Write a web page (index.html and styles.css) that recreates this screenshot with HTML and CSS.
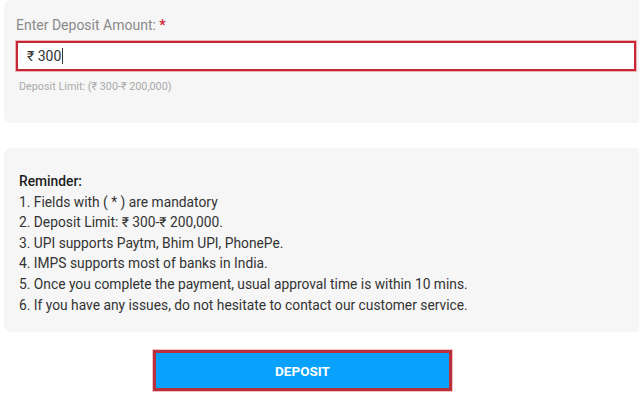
FILE: index.html
```html
<!DOCTYPE html>
<html>
<head>
<meta charset="utf-8">
<link rel="stylesheet" href="styles.css">
</head>
<body>
<div class="page">
  <section class="panel amount-panel">
    <label class="field-label">Enter Deposit Amount: <span class="req">*</span></label>
    <div class="amount-input"><span class="amount-value">₹ 300</span><span class="caret"></span></div>
    <div class="limit-hint">Deposit Limit: (₹ 300-₹ 200,000)</div>
  </section>
  <section class="panel reminder-panel">
    <div class="reminder-title">Reminder:</div>
    <ol class="reminder-list">
      <li>1. Fields with ( * ) are mandatory</li>
      <li>2. Deposit Limit: ₹ 300-₹ 200,000.</li>
      <li>3. UPI supports Paytm, Bhim UPI, PhonePe.</li>
      <li>4. IMPS supports most of banks in India.</li>
      <li>5. Once you complete the payment, usual approval time is within 10 mins.</li>
      <li>6. If you have any issues, do not hesitate to contact our customer service.</li>
    </ol>
  </section>
  <div class="actions">
    <button class="deposit-btn">DEPOSIT</button>
  </div>
</div>
</body>
</html>
```
FILE: styles.css
```css
* { box-sizing: border-box; }
html, body { margin: 0; padding: 0; background: #fff; }
body { font-family: Roboto, "Liberation Sans", Arial, sans-serif; width: 639px; height: 400px; overflow: hidden; }
.page { display: flex; flex-direction: column; padding-left: 4px; width: 650px; }
.panel { background: #f6f6f6; border-radius: 7px; }
.amount-panel { height: 123px; padding: 17px 14px 0 12px; display: flex; flex-direction: column; }
.field-label { font-size: 14px; color: #8a8a8a; line-height: 16px; }
.req { color: #d0283a; font-weight: 700; }
.amount-input {
  margin-top: 8px;
  height: 30px;
  background: #fff;
  border: 2px solid #c32a35;
  box-shadow: 0 0 0 1px rgba(232, 90, 105, 0.45);
  display: flex; align-items: center;
  padding-left: 9px;
  font-size: 14px; color: #333;
}
.caret { display: inline-block; width: 1px; height: 16px; background: #333; margin-left: 1px; }
.limit-hint { margin-top: 9px; font-size: 10.8px; color: #a9a9a9; line-height: 14px; padding-left: 3px; }
.reminder-panel { margin-top: 25px; height: 184px; padding: 23px 0 0 15px; color: #333; font-size: 13.8px; line-height: 20.6px; }
.reminder-title { font-weight: 500; color: #1e1e1e; }
.reminder-list { list-style: none; margin: 0; padding: 0; }
.actions { padding-left: 149px; margin-top: 18px; }
.deposit-btn {
  width: 299px; height: 41px;
  background: #08a1fb;
  border: 3px solid #b7303c;
  box-shadow: 0 0 0 1px rgba(230, 100, 115, 0.4);
  color: #fff; font-family: Roboto, "Liberation Sans", Arial, sans-serif;
  font-size: 13.5px; font-weight: 700; padding: 0;
}
```
